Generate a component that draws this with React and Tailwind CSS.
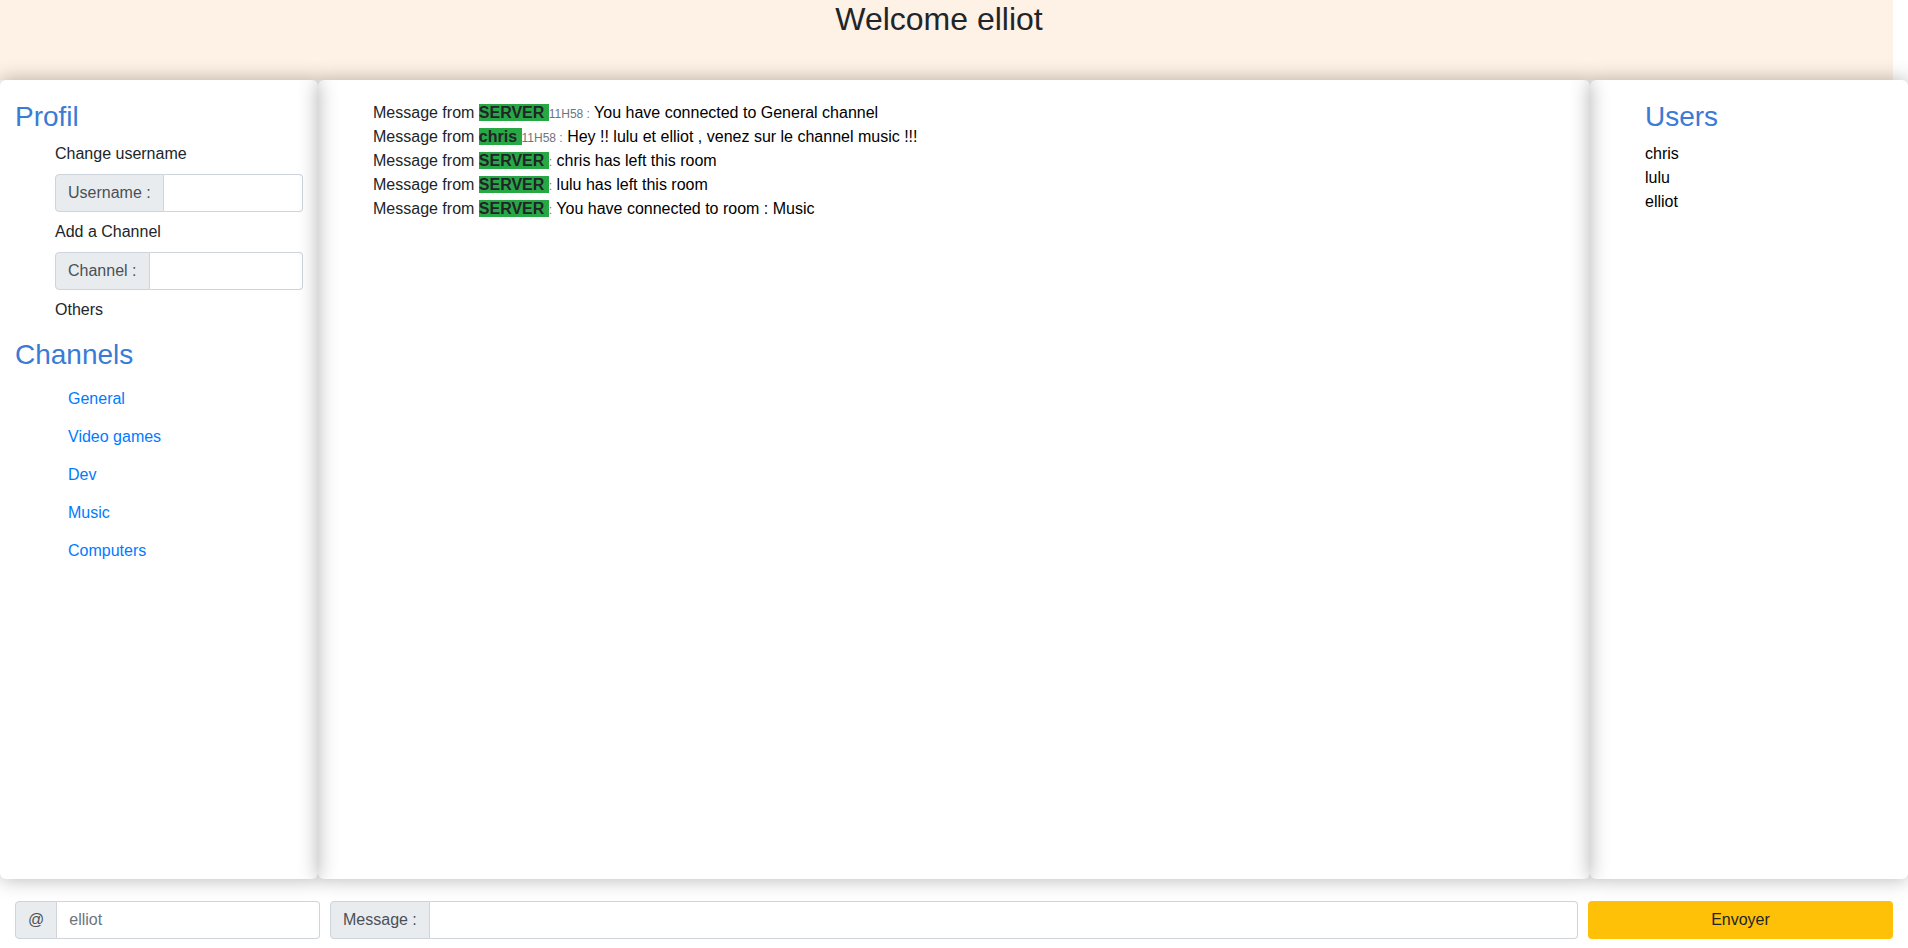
import React from 'react';

const channels = ['General', 'Video games', 'Dev', 'Music', 'Computers'];
const users = ['chris', 'lulu', 'elliot'];

const messages = [
    { from: 'SERVER', time: '11H58', text: 'You have connected to General channel' },
    { from: 'chris', time: '11H58', text: 'Hey !! lulu et elliot , venez sur le channel music !!!' },
    { from: 'SERVER', time: '', text: 'chris has left this room' },
    { from: 'SERVER', time: '', text: 'lulu has left this room' },
    { from: 'SERVER', time: '', text: 'You have connected to room : Music' },
];

const InputGroup = ({ label, placeholder }) => (
    <div className="flex h-[38px] w-full">
        <span className="flex items-center px-3 bg-[#e9ecef] border border-[#ced4da] rounded-l-[4px] text-[#495057] whitespace-nowrap">
            {label}
        </span>
        <input
            type="text"
            placeholder={placeholder}
            className="flex-1 min-w-0 px-3 border border-l-0 border-[#ced4da] rounded-r-[4px] text-[#495057] placeholder:text-[#6c757d] outline-none bg-white"
        />
    </div>
);

const App = () => {
    return (
        <div className="w-[1908px] h-[948px] bg-white text-[16px] leading-6 text-[#212529] font-['Liberation_Sans',Arial,sans-serif] overflow-hidden">
            {/* header */}
            <div className="w-[1893px] h-[80px] bg-[#fef1e5] pr-[15px]">
                <h2 className="text-[32px] leading-[1.2] text-center">Welcome elliot</h2>
            </div>

            {/* panels */}
            <div className="flex h-[799px]">
                <div className="w-[318px] rounded-md shadow-[0_0_20px_rgba(0,0,0,0.3)] px-[15px] pt-5">
                    <h3 className="text-[28px] leading-[1.2] mb-2 text-[#3a7bd5]">Profil</h3>
                    <ul className="pl-10 flex flex-col gap-2">
                        <li>Change username</li>
                        <li><InputGroup label="Username :" /></li>
                        <li>Add a Channel</li>
                        <li><InputGroup label="Channel :" /></li>
                        <li>Others</li>
                    </ul>
                    <h3 className="text-[28px] leading-[1.2] mt-4 mb-[9px] text-[#3a7bd5]">Channels</h3>
                    <ul className="pl-[53px]">
                        {channels.map((c) => (
                            <li key={c} className="py-[7px]">
                                <a href="#" className="text-[#007bff]">{c}</a>
                            </li>
                        ))}
                    </ul>
                </div>

                <div className="w-[1272px] rounded-md shadow-[0_0_20px_rgba(0,0,0,0.3)] pl-[55px] pt-[21px]">
                    <ul>
                        {messages.map((m, i) => (
                            <li key={i} className="h-6 leading-6 whitespace-nowrap">
                                Message from{' '}
                                <span className="bg-[#28a745] font-bold">{m.from} </span>
                                <small className="text-[12px] leading-none text-[#6c757d]">{m.time ? m.time + ' :' : ':'}</small>
                                <span className="text-black"> {m.text}</span>
                            </li>
                        ))}
                    </ul>
                </div>

                <div className="w-[318px] rounded-md shadow-[0_0_20px_rgba(0,0,0,0.3)] pl-[55px] pt-5">
                    <h3 className="text-[28px] leading-[1.2] mb-2 text-[#3a7bd5]">Users</h3>
                    <ul className="text-black">
                        {users.map((u) => (
                            <li key={u}>{u}</li>
                        ))}
                    </ul>
                </div>
            </div>

            {/* bottom bar */}
            <div className="flex gap-[10px] pl-[15px] mt-[22px]">
                <div className="w-[305px]">
                    <InputGroup label="@" placeholder="elliot" />
                </div>
                <div className="w-[1248px]">
                    <InputGroup label="Message :" />
                </div>
                <button className="w-[305px] h-[38px] bg-[#ffc107] rounded-[4px] text-[#212529]">
                    Envoyer
                </button>
            </div>
        </div>
    );
};

export default App;
